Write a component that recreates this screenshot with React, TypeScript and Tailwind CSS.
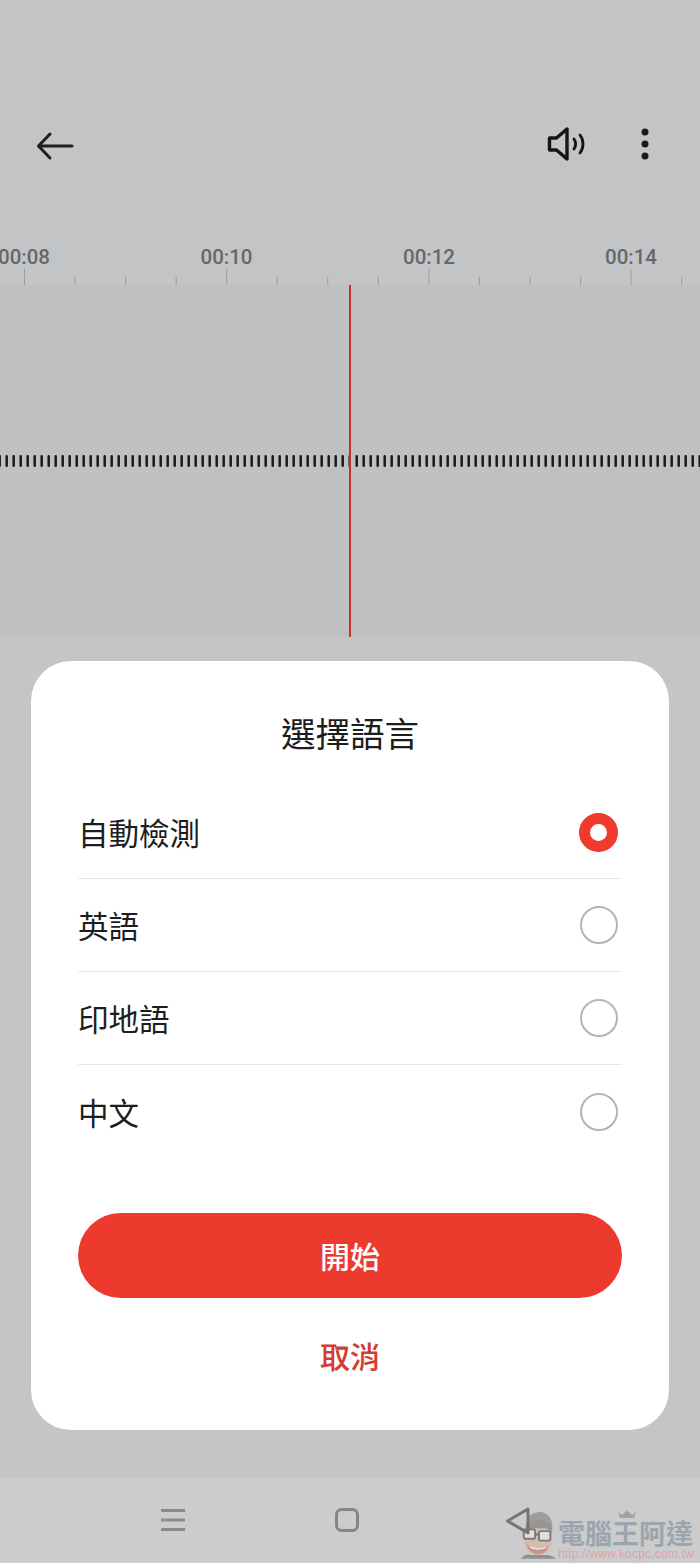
const cjk = "font-['Noto_Sans_CJK_TC','Noto_Sans',sans-serif]";

const timeLabels = [
  { label: "00:08", x: 24 },
  { label: "00:10", x: 226.5 },
  { label: "00:12", x: 429 },
  { label: "00:14", x: 631 },
];

const languages = ["自動檢測", "英語", "印地語", "中文"];

function TimeRuler() {
  const ticks = Array.from({ length: 14 }, (_, i) => 24.5 + i * 50.55);
  return (
    <svg width="700" height="46" viewBox="0 0 700 46" className="block">
      {ticks.map((x, i) => (
        <rect
          key={x}
          x={x - 0.5}
          y={i % 4 === 0 ? 30 : 38}
          width="1"
          height={i % 4 === 0 ? 16 : 8}
          fill="#9c9d9f"
        />
      ))}
    </svg>
  );
}

function Waveform() {
  const bars = Array.from({ length: 101 }, (_, i) => -0.3 + i * 7);
  return (
    <svg width="700" height="14" viewBox="0 0 700 14" className="block">
      {bars.map((x) => (
        <rect key={x} x={x - 1.25} y="1" width="2.5" height="12" rx="1.2" fill="#1a1a1a" />
      ))}
    </svg>
  );
}

function Watermark() {
  return (
    <div className="absolute left-[518px] top-[30px] flex h-[52px] w-[180px] items-start opacity-75">
      <svg width="40" height="52" viewBox="0 0 42 52" className="shrink-0">
        <path d="M8 20 C8 8 16 2 24 3 C33 4 37 12 36 22 L33 34 L11 34 Z" fill="#8f8f8c" />
        <ellipse cx="21" cy="31" rx="15" ry="17" fill="#d9b9a4" />
        <path d="M7 24 C9 14 15 11 22 11 C29 11 34 15 36 23 L28 20 L14 20 Z" fill="#85837f" />
        <rect x="6" y="21" width="12" height="10" rx="2" fill="#e4e4e2" stroke="#5f5f5f" strokeWidth="2" />
        <rect x="22" y="23" width="12" height="10" rx="2" fill="#e4e4e2" stroke="#5f5f5f" strokeWidth="2" />
        <path d="M18 26 L22 27" stroke="#5f5f5f" strokeWidth="2" />
        <path d="M9 37 C15 41 25 42 32 38 C31 45 25 48 19 47 C14 46 10 43 9 37 Z" fill="#d27f78" />
        <path d="M12 38.5 C18 41 25 41 30 39 L29 41 C24 43 17 43 13 41 Z" fill="#f0ecea" />
        <path d="M3 52 C6 48 10 47 13 48 L30 48 C34 48 38 50 40 52 Z" fill="#7d7d7a" />
      </svg>
      <div className="relative flex flex-col pt-[10px]">
        <svg width="20" height="9" viewBox="0 0 20 9" className="absolute left-[59px] top-[2px]">
          <path d="M1 2 L5 5 L10 0.5 L15 5 L19 2 L17 8 L3 8 Z" fill="#8a97a2" />
        </svg>
        <span className={`${cjk} whitespace-nowrap text-[27px] leading-[29px] font-bold text-[#8c99a5]`}>
          電腦王阿達
        </span>
        <span className="font-['Liberation_Sans',sans-serif] text-[12px] leading-[14px] tracking-[0.2px] whitespace-nowrap text-[#e0979d]">
          http://www.kocpc.com.tw
        </span>
      </div>
    </div>
  );
}

export default function App() {
  return (
    <div className="flex h-[1563px] w-[700px] flex-col overflow-hidden bg-[#c4c5c7]">
      <div className="h-[285px] bg-[#c3c4c6]">
        <div className="flex h-[161px] items-end justify-between pr-[51px] pl-[36px]">
          <svg width="38" height="30" viewBox="0 0 38 30">
            <path
              d="M36 15 H3 M14 3 L2.5 15 L14 27"
              fill="none"
              stroke="#1f1f1f"
              strokeWidth="3"
              strokeLinecap="round"
              strokeLinejoin="round"
            />
          </svg>
          <div className="flex items-center gap-[52px]">
            <svg width="42" height="34" viewBox="0 0 42 34">
              <path
                d="M2.5 11 H9.5 L20 2 V32 L9.5 23 H2.5 Z"
                fill="none"
                stroke="#141414"
                strokeWidth="3.4"
                strokeLinejoin="round"
              />
              <path d="M27 12 C29 15 29 19 27 22" fill="none" stroke="#141414" strokeWidth="2.8" strokeLinecap="round" />
              <path d="M33 8 C37 13 37 21 33 26" fill="none" stroke="#141414" strokeWidth="2.8" strokeLinecap="round" />
            </svg>
            <svg width="8" height="32" viewBox="0 0 8 32">
              <circle cx="4" cy="4" r="3.5" fill="#1a1a1a" />
              <circle cx="4" cy="16" r="3.5" fill="#1a1a1a" />
              <circle cx="4" cy="28" r="3.5" fill="#1a1a1a" />
            </svg>
          </div>
        </div>
        <div className="relative h-[124px]">
          {timeLabels.map((t) => (
            <span
              key={t.label}
              style={{ left: t.x }}
              className="absolute top-[83px] -translate-x-1/2 font-['Roboto',sans-serif] text-[20.5px] leading-[26px] font-medium text-[#666769]"
            >
              {t.label}
            </span>
          ))}
          <div className="absolute bottom-0 left-0">
            <TimeRuler />
          </div>
        </div>
      </div>

      <div className="relative flex h-[352px] items-center bg-[#bfc0c2]">
        <Waveform />
        <div className="absolute top-0 left-[349px] h-full w-[2px] bg-[#c8302a]" />
      </div>

      <div className="flex flex-1 flex-col px-[31px] pt-[24px]">
        <div className={`${cjk} flex h-[769px] flex-col rounded-[40px] bg-white px-[47px]`}>
          <h2 className="pt-[46px] text-center text-[34.5px] leading-[50px] font-normal text-[#1d1d1d]">選擇語言</h2>
          <div className="mt-[29px] flex flex-col">
            {languages.map((lang, i) => (
              <div
                key={lang}
                className={`flex h-[93.1px] items-center justify-between pr-[4px] ${
                  i < languages.length - 1 ? "border-b border-[#e6e6e6]" : ""
                }`}
              >
                <span className="text-[30.5px] leading-[40px] text-[#1d1d1d]">{lang}</span>
                {i === 0 ? (
                  <span className="flex size-[39px] items-center justify-center rounded-full border-[11px] border-[#ee3b2e] bg-white" />
                ) : (
                  <span className="size-[38px] rounded-full border-[2.5px] border-[#b4b4b4] bg-white" />
                )}
              </div>
            ))}
          </div>
          <button className="mt-[55px] flex h-[85px] w-full items-center justify-center rounded-full bg-[#ec3b2e] text-[30px] font-medium text-white">
            開始
          </button>
          <button className="mt-[35px] text-center text-[30px] leading-[44px] font-medium text-[#d43d30]">取消</button>
        </div>
      </div>

      <div className="relative flex h-[85px] shrink-0 items-center bg-[#cccccc] pb-[1px] pl-[161px]">
        <svg width="24" height="22" viewBox="0 0 24 22">
          <path d="M0 1.5 H24 M0 11 H24 M0 20.5 H24" stroke="#8b8b8b" strokeWidth="3" />
        </svg>
        <svg width="24" height="24" viewBox="0 0 24 24" className="ml-[150px]">
          <rect x="1.5" y="1.5" width="21" height="21" rx="5" fill="none" stroke="#858585" strokeWidth="3" />
        </svg>
        <div className="absolute inset-y-0 left-0">
          <Watermark />
        </div>
        <svg width="26" height="28" viewBox="0 0 26 28" className="absolute top-[29px] left-[505px]">
          <path
            d="M23 2 L2.5 14 L23 26 Z"
            fill="none"
            stroke="#757575"
            strokeWidth="3"
            strokeLinejoin="round"
          />
        </svg>
      </div>
    </div>
  );
}
